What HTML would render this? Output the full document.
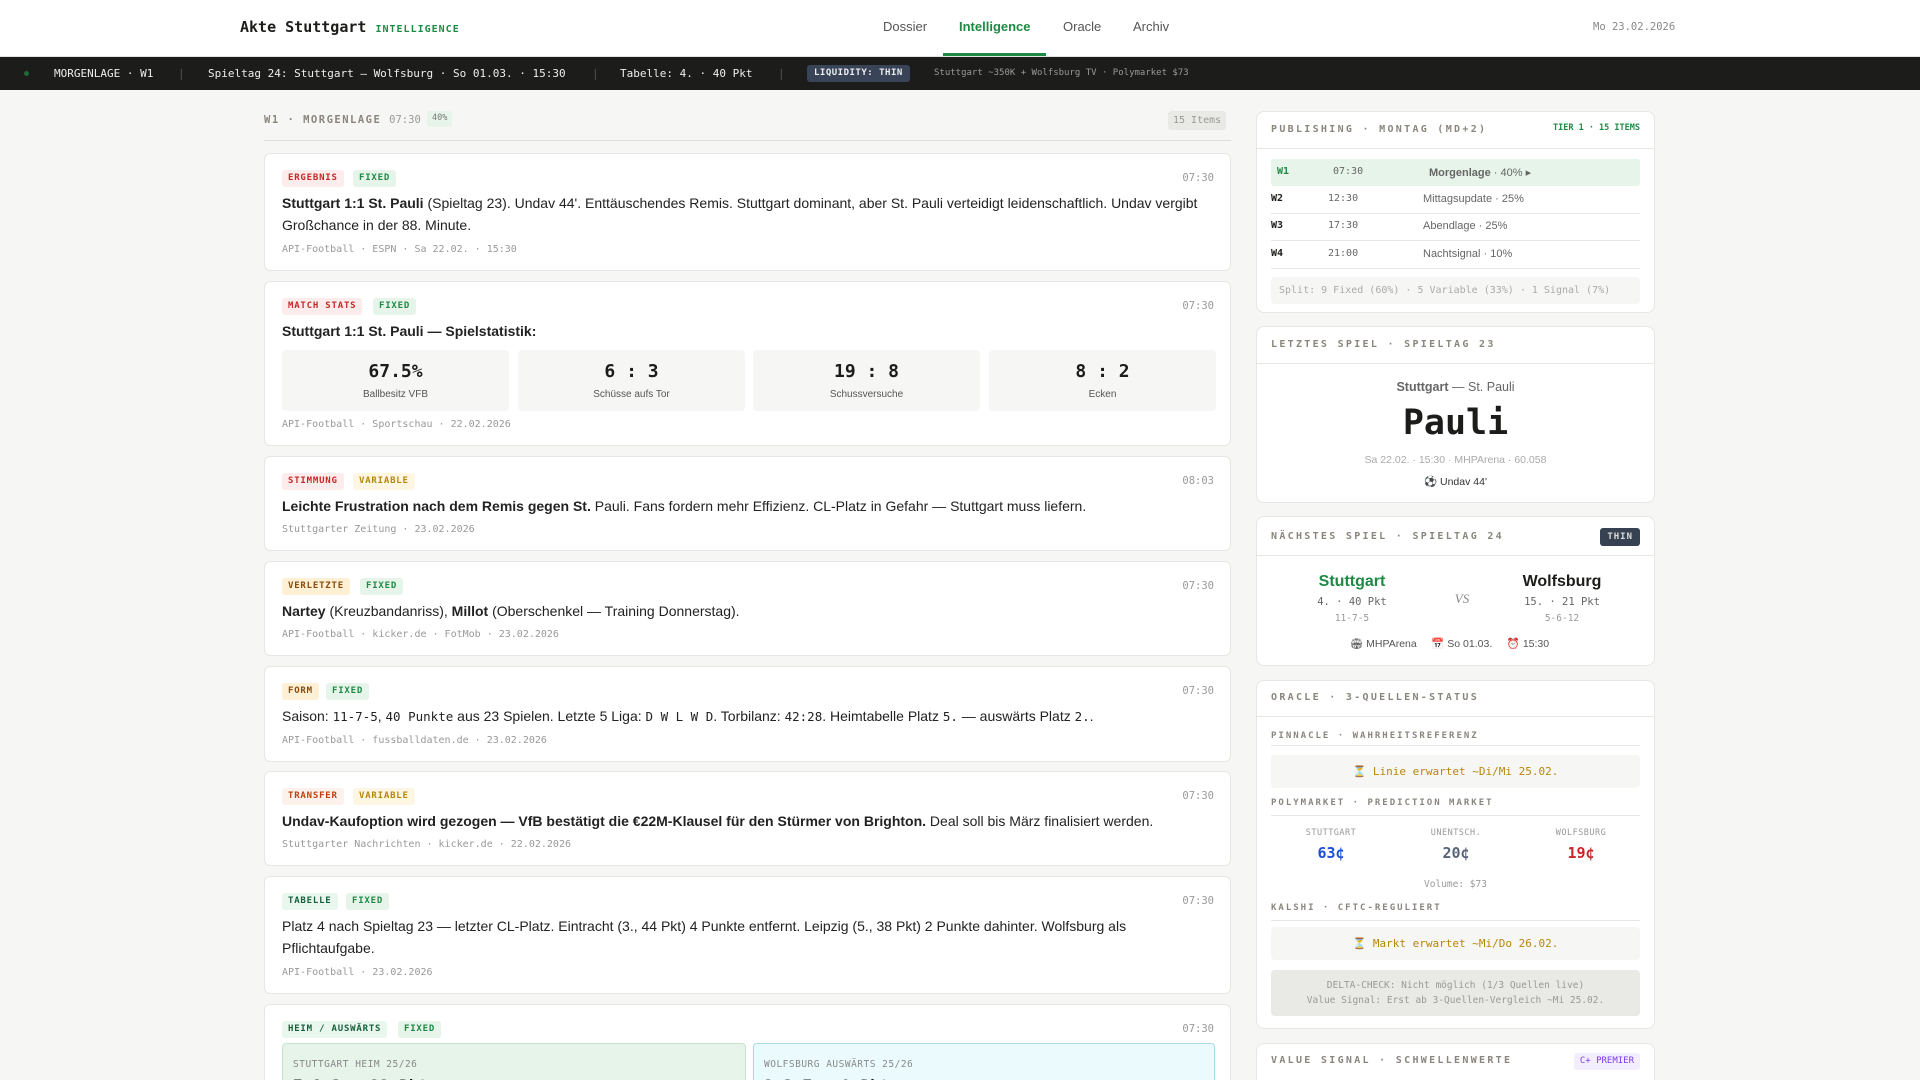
<!DOCTYPE html>
<html style="overflow:hidden;width:1920px;height:1080px"><head><meta charset="utf-8"><style>
*{box-sizing:border-box;margin:0;padding:0}
html,body{overflow:hidden}
body{width:1920px;height:1080px;background:#f6f6f4;font-family:"Liberation Sans",sans-serif;color:#1c1c1a;position:relative}
.mono{font-family:"DejaVu Sans Mono","Liberation Mono",monospace}
.hdr{position:absolute;left:0;top:0;width:1920px;height:57px;background:#fff;border-bottom:1px solid #e2e2de}
.ab{position:absolute}
.tick{position:absolute;left:0;top:57px;width:1920px;height:33px;background:#1c1c1a;color:#eee;font-size:11px}
.tick span{position:absolute;top:10px;white-space:nowrap}
.card{position:absolute;left:264px;width:967px;background:#fff;border:1px solid #e6e6e2;border-radius:6px;overflow:hidden}
.tag{position:absolute;top:16px;height:17px;padding:0 6px;border-radius:3px;font-family:"DejaVu Sans Mono",monospace;font-size:9px;font-weight:bold;letter-spacing:.8px;line-height:17px}
.red{background:#fdecec;color:#c62828}
.grn{background:#e6f4ea;color:#1e8a44}
.yel{background:#fdf6e3;color:#b8860b}
.org{background:#fdf0d5;color:#8a4b0b}
.tgr{background:#eaf7ee;color:#17603a}
.trn{background:#fdf1ec;color:#c2410c}
.time{position:absolute;right:16px;top:18px;font-family:"DejaVu Sans Mono",monospace;font-size:10.5px;color:#999}
.txt{position:absolute;left:17px;right:17px;font-size:14px;line-height:22px;color:#222}
.meta{position:absolute;left:17px;font-family:"DejaVu Sans Mono",monospace;font-size:10px;color:#999}
.stat{position:absolute;top:68px;width:227px;height:61px;background:#f6f6f4;border-radius:4px;text-align:center}
.stat b{display:block;font-family:"DejaVu Sans Mono",monospace;font-size:18px;margin-top:11px}
.stat i{display:block;font-style:normal;font-size:10px;color:#555;margin-top:7px}
.rc{position:absolute;left:1256px;width:399px;background:#fff;border:1px solid #e6e6e2;border-radius:8px;overflow:hidden}
.rh{position:absolute;left:14px;top:12px;font-family:"DejaVu Sans Mono",monospace;font-weight:bold;letter-spacing:2.3px;color:#8a867e}
.rline{position:absolute;left:0;right:0;height:1px;background:#e6e6e2}
.sub{position:absolute;left:14px;font-family:"DejaVu Sans Mono",monospace;font-weight:bold;letter-spacing:2px;color:#8a867e}
.box{position:absolute;left:14px;right:14px;background:#f6f6f4;border-radius:4px;text-align:center;font-family:"DejaVu Sans Mono",monospace}
</style></head><body>
<div class="hdr">
  <div class="ab mono" style="left:240px;top:18px;font-size:15px;font-weight:bold">Akte Stuttgart <span style="font-size:10px;color:#1e8a44;letter-spacing:1px">INTELLIGENCE</span></div>
  <div class="ab" style="left:883px;top:19px;font-size:13px;color:#555">Dossier</div>
  <div class="ab" style="left:959px;top:19px;font-size:13px;color:#1e8a44;font-weight:bold">Intelligence</div>
  <div class="ab" style="left:943px;top:53px;width:103px;height:3px;background:#1e8a44"></div>
  <div class="ab" style="left:1063px;top:19px;font-size:13px;color:#555">Oracle</div>
  <div class="ab" style="left:1133px;top:19px;font-size:13px;color:#555">Archiv</div>
  <div class="ab mono" style="left:1593px;top:21px;font-size:10.5px;color:#888">Mo 23.02.2026</div>
</div>
<div class="tick mono">
  <span style="left:24px;top:14px;width:5px;height:5px;border-radius:50%;background:#1e6b3a"></span>
  <span style="left:54px">MORGENLAGE · W1</span>
  <span style="left:178px;color:#555">|</span>
  <span style="left:208px">Spieltag 24: Stuttgart – Wolfsburg · So 01.03. · 15:30</span>
  <span style="left:592px;color:#555">|</span>
  <span style="left:620px">Tabelle: 4. · 40 Pkt</span>
  <span style="left:778px;color:#555">|</span>
  <span style="left:807px;top:8px;height:17px;padding:0 7px;background:#3a4459;border-radius:3px;font-size:9px;line-height:17px;font-weight:bold;letter-spacing:.5px">LIQUIDITY: THIN</span>
  <span style="left:934px;top:11px;font-size:9px;color:#999">Stuttgart ~350K + Wolfsburg TV · Polymarket $73</span>
</div>

<div class="ab mono" style="left:264px;top:114px;font-size:10.5px;font-weight:bold;color:#8a867e;letter-spacing:1.5px">W1 · MORGENLAGE <span style="font-weight:normal;letter-spacing:0;color:#999">07:30</span></div>
<div class="ab mono" style="left:427px;top:111px;height:16px;padding:0 5px;background:#e6f4ea;color:#777;font-size:8.5px;line-height:15px;border-radius:3px">40%</div>
<div class="ab mono" style="left:1168px;top:111px;height:19px;padding:0 5px;background:#e9e9e5;color:#999;font-size:10px;line-height:19px;border-radius:3px">15 Items</div>
<div class="ab" style="left:264px;top:140px;width:967px;height:1px;background:#ddd"></div>

<div class="card" style="top:153px;height:118px">
  <div class="tag red" style="left:17px">ERGEBNIS</div><div class="tag grn" style="left:88px">FIXED</div>
  <div class="time">07:30</div>
  <div class="txt" style="top:38px"><b>Stuttgart 1:1 St. Pauli</b> (Spieltag 23). Undav 44'. Enttäuschendes Remis. Stuttgart dominant, aber St. Pauli verteidigt leidenschaftlich. Undav vergibt Großchance in der 88. Minute.</div>
  <div class="meta" style="top:90px">API-Football · ESPN · Sa 22.02. · 15:30</div>
</div>
<div class="card" style="top:281px;height:165px">
  <div class="tag red" style="left:17px">MATCH STATS</div><div class="tag grn" style="left:108px">FIXED</div>
  <div class="time">07:30</div>
  <div class="txt" style="top:38px"><b>Stuttgart 1:1 St. Pauli — Spielstatistik:</b></div>
  <div class="stat" style="left:17px"><b>67.5%</b><i>Ballbesitz VFB</i></div>
  <div class="stat" style="left:253px"><b>6 : 3</b><i>Schüsse aufs Tor</i></div>
  <div class="stat" style="left:488px"><b>19 : 8</b><i>Schussversuche</i></div>
  <div class="stat" style="left:724px"><b>8 : 2</b><i>Ecken</i></div>
  <div class="meta" style="top:137px">API-Football · Sportschau · 22.02.2026</div>
</div>
<div class="card" style="top:456px;height:95px">
  <div class="tag red" style="left:17px">STIMMUNG</div><div class="tag yel" style="left:88px">VARIABLE</div>
  <div class="time">08:03</div>
  <div class="txt" style="top:38px"><b>Leichte Frustration nach dem Remis gegen St.</b> Pauli. Fans fordern mehr Effizienz. CL-Platz in Gefahr — Stuttgart muss liefern.</div>
  <div class="meta" style="top:67px">Stuttgarter Zeitung · 23.02.2026</div>
</div>
<div class="card" style="top:561px;height:95px">
  <div class="tag org" style="left:17px">VERLETZTE</div><div class="tag grn" style="left:95px">FIXED</div>
  <div class="time">07:30</div>
  <div class="txt" style="top:38px"><b>Nartey</b> (Kreuzbandanriss), <b>Millot</b> (Oberschenkel — Training Donnerstag).</div>
  <div class="meta" style="top:67px">API-Football · kicker.de · FotMob · 23.02.2026</div>
</div>
<div class="card" style="top:666px;height:96px">
  <div class="tag org" style="left:17px">FORM</div><div class="tag grn" style="left:61px">FIXED</div>
  <div class="time">07:30</div>
  <div class="txt" style="top:38px">Saison: <span class="mono" style="font-size:12.5px">11-7-5</span>, <span class="mono" style="font-size:12.5px">40 Punkte</span> aus 23 Spielen. Letzte 5 Liga: <span class="mono" style="font-size:12.5px">D W L W D</span>. Torbilanz: <span class="mono" style="font-size:12.5px">42:28</span>. Heimtabelle Platz <span class="mono" style="font-size:12.5px">5.</span> — auswärts Platz <span class="mono" style="font-size:12.5px">2.</span>.</div>
  <div class="meta" style="top:68px">API-Football · fussballdaten.de · 23.02.2026</div>
</div>
<div class="card" style="top:771px;height:95px">
  <div class="tag trn" style="left:17px">TRANSFER</div><div class="tag yel" style="left:88px">VARIABLE</div>
  <div class="time">07:30</div>
  <div class="txt" style="top:38px"><b>Undav-Kaufoption wird gezogen — VfB bestätigt die €22M-Klausel für den Stürmer von Brighton.</b> Deal soll bis März finalisiert werden.</div>
  <div class="meta" style="top:67px">Stuttgarter Nachrichten · kicker.de · 22.02.2026</div>
</div>
<div class="card" style="top:876px;height:118px">
  <div class="tag tgr" style="left:17px">TABELLE</div><div class="tag grn" style="left:81px">FIXED</div>
  <div class="time">07:30</div>
  <div class="txt" style="top:38px">Platz 4 nach Spieltag 23 — letzter CL-Platz. Eintracht (3., 44 Pkt) 4 Punkte entfernt. Leipzig (5., 38 Pkt) 2 Punkte dahinter. Wolfsburg als Pflichtaufgabe.</div>
  <div class="meta" style="top:90px">API-Football · 23.02.2026</div>
</div>
<div class="card" style="top:1004px;height:76px;border-bottom:none;border-radius:6px 6px 0 0">
  <div class="tag tgr" style="left:17px">HEIM / AUSWÄRTS</div><div class="tag grn" style="left:133px">FIXED</div>
  <div class="time">07:30</div>
  <div class="ab" style="left:17px;top:38px;width:464px;height:80px;background:#e6f4ea;border:1px solid #c8e2cf;border-radius:4px">
    <div class="ab mono" style="left:10px;top:15px;font-size:9.5px;color:#888;letter-spacing:.5px">STUTTGART HEIM 25/26</div>
    <div class="ab mono" style="left:10px;top:32px;font-size:16px;font-weight:bold">7-1-3 · 22 Pkt</div></div>
  <div class="ab" style="left:488px;top:38px;width:462px;height:80px;background:#ebfbfd;border:1px solid #a8dbe3;border-radius:4px">
    <div class="ab mono" style="left:10px;top:15px;font-size:9.5px;color:#888;letter-spacing:.5px">WOLFSBURG AUSWÄRTS 25/26</div>
    <div class="ab mono" style="left:10px;top:32px;font-size:16px;font-weight:bold">2-3-7 · 9 Pkt</div></div>
</div>

<!-- right column -->
<div class="rc" style="top:111px;height:202px">
  <div class="rh" style="top:12px;font-size:10px">PUBLISHING · MONTAG (MD+2)</div>
  <div class="ab mono" style="right:14px;top:11px;font-size:8.5px;color:#1e8a44;font-weight:bold">TIER 1 · 15 ITEMS</div>
  <div class="rline" style="top:36px"></div>
  <div class="ab" style="left:14px;right:14px;top:47px;height:27px;background:#e6f4ea;border-radius:3px"></div>
  <div class="ab mono" style="left:20px;top:54px;font-size:10px;font-weight:bold;color:#1e8a44">W1</div>
  <div class="ab mono" style="left:76px;top:54px;font-size:10px;color:#666">07:30</div>
  <div class="ab" style="left:172px;top:54px;font-size:11px;color:#666"><b>Morgenlage</b> · 40% ▸</div>
  <div class="ab mono" style="left:14px;top:81px;font-size:10px;font-weight:bold">W2</div><div class="ab mono" style="left:71px;top:81px;font-size:10px;color:#666">12:30</div><div class="ab" style="left:166px;top:81px;font-size:11px;color:#666">Mittagsupdate · 25%</div>
  <div class="rline" style="left:14px;right:14px;top:101px"></div>
  <div class="ab mono" style="left:14px;top:108px;font-size:10px;font-weight:bold">W3</div><div class="ab mono" style="left:71px;top:108px;font-size:10px;color:#666">17:30</div><div class="ab" style="left:166px;top:108px;font-size:11px;color:#666">Abendlage · 25%</div>
  <div class="rline" style="left:14px;right:14px;top:128px"></div>
  <div class="ab mono" style="left:14px;top:136px;font-size:10px;font-weight:bold">W4</div><div class="ab mono" style="left:71px;top:136px;font-size:10px;color:#666">21:00</div><div class="ab" style="left:166px;top:136px;font-size:11px;color:#666">Nachtsignal · 10%</div>
  <div class="rline" style="left:14px;right:14px;top:156px"></div>
  <div class="box" style="top:165px;height:27px;text-align:left;padding-left:8px;line-height:27px;font-size:10px;color:#aaa">Split: 9 Fixed (60%) · 5 Variable (33%) · 1 Signal (7%)</div>
</div>

<div class="rc" style="top:326px;height:177px">
  <div class="rh" style="top:12px;font-size:10px">LETZTES SPIEL · SPIELTAG 23</div>
  <div class="rline" style="top:36px"></div>
  <div class="ab" style="left:0;right:0;top:53px;text-align:center;font-size:12.5px;color:#666"><b>Stuttgart</b> — St. Pauli</div>
  <div class="ab mono" style="left:0;right:0;top:76px;text-align:center;font-size:35px;font-weight:bold;color:#1c1c1a">Pauli</div>
  <div class="ab" style="left:0;right:0;top:127px;text-align:center;font-size:10.5px;color:#aaa">Sa 22.02. · 15:30 · MHPArena · 60.058</div>
  <div class="ab" style="left:0;right:0;top:148px;text-align:center;font-size:10.5px;color:#333">⚽ Undav 44'</div>
</div>

<div class="rc" style="top:516px;height:150px">
  <div class="rh" style="top:14px;font-size:10px">NÄCHSTES SPIEL · SPIELTAG 24</div>
  <div class="ab mono" style="right:14px;top:11px;height:18px;padding:0 7px;background:#364152;color:#ddd;border-radius:3px;font-size:9px;font-weight:bold;line-height:18px;letter-spacing:1px">THIN</div>
  <div class="rline" style="top:38px"></div>
  <div class="ab" style="left:45px;width:100px;top:56px;text-align:center;font-size:16px;font-weight:bold;color:#1e8a44">Stuttgart</div>
  <div class="ab mono" style="left:30px;width:130px;top:79px;text-align:center;font-size:10.5px;color:#666">4. · 40 Pkt</div>
  <div class="ab mono" style="left:30px;width:130px;top:96px;text-align:center;font-size:9.5px;color:#999">11-7-5</div>
  <div class="ab" style="left:180px;width:50px;top:74px;text-align:center;font-family:'Liberation Serif',serif;font-style:italic;font-size:13px;color:#888">VS</div>
  <div class="ab" style="left:245px;width:120px;top:56px;text-align:center;font-size:16px;font-weight:bold">Wolfsburg</div>
  <div class="ab mono" style="left:240px;width:130px;top:79px;text-align:center;font-size:10.5px;color:#666">15. · 21 Pkt</div>
  <div class="ab mono" style="left:240px;width:130px;top:96px;text-align:center;font-size:9.5px;color:#999">5-6-12</div>
  <div class="ab" style="left:0;right:0;top:120px;text-align:center;font-size:10.5px;color:#555;padding-right:12px">🏟 MHPArena &nbsp;&nbsp;&nbsp; 📅 So 01.03. &nbsp;&nbsp;&nbsp; ⏰ 15:30</div>
</div>

<div class="rc" style="top:680px;height:349px">
  <div class="rh" style="top:11px;font-size:10px">ORACLE · 3-QUELLEN-STATUS</div>
  <div class="rline" style="top:35px"></div>
  <div class="sub" style="top:50px;font-size:9px">PINNACLE · WAHRHEITSREFERENZ</div>
  <div class="rline" style="left:14px;right:14px;top:64px"></div>
  <div class="box" style="top:74px;height:33px;line-height:33px;font-size:11px;color:#b8860b">⏳ Linie erwartet ~Di/Mi 25.02.</div>
  <div class="sub" style="top:117px;font-size:9px">POLYMARKET · PREDICTION MARKET</div>
  <div class="rline" style="left:14px;right:14px;top:134px"></div>
  <div class="ab mono" style="left:14px;width:120px;top:147px;text-align:center;font-size:8.5px;color:#999;letter-spacing:.5px">STUTTGART</div>
  <div class="ab mono" style="left:14px;width:120px;top:163px;text-align:center;font-size:15px;font-weight:bold;color:#1d4ed8">63¢</div>
  <div class="ab mono" style="left:139px;width:120px;top:147px;text-align:center;font-size:8.5px;color:#999;letter-spacing:.5px">UNENTSCH.</div>
  <div class="ab mono" style="left:139px;width:120px;top:163px;text-align:center;font-size:15px;font-weight:bold;color:#5a6478">20¢</div>
  <div class="ab mono" style="left:264px;width:120px;top:147px;text-align:center;font-size:8.5px;color:#999;letter-spacing:.5px">WOLFSBURG</div>
  <div class="ab mono" style="left:264px;width:120px;top:163px;text-align:center;font-size:15px;font-weight:bold;color:#c62828">19¢</div>
  <div class="ab mono" style="left:0;right:0;top:198px;text-align:center;font-size:9.5px;color:#999">Volume: $73</div>
  <div class="sub" style="top:222px;font-size:9px">KALSHI · CFTC-REGULIERT</div>
  <div class="rline" style="left:14px;right:14px;top:239px"></div>
  <div class="box" style="top:246px;height:33px;line-height:33px;font-size:11px;color:#b8860b">⏳ Markt erwartet ~Mi/Do 26.02.</div>
  <div class="box" style="top:289px;height:46px;background:#e9e9e5;font-size:9.5px;color:#999;padding-top:8px;line-height:15px">DELTA-CHECK: Nicht möglich (1/3 Quellen live)<br>Value Signal: Erst ab 3-Quellen-Vergleich ~Mi 25.02.</div>
</div>

<div class="rc" style="top:1043px;height:37px;border-bottom:none;border-radius:8px 8px 0 0">
  <div class="rh" style="top:11px;font-size:10px">VALUE SIGNAL · SCHWELLENWERTE</div>
  <div class="ab mono" style="right:14px;top:9px;height:17px;padding:0 6px;background:#f3eefe;color:#7c3aed;border-radius:3px;font-size:9px;line-height:17px">C+ PREMIER</div>
</div>
</body></html>
